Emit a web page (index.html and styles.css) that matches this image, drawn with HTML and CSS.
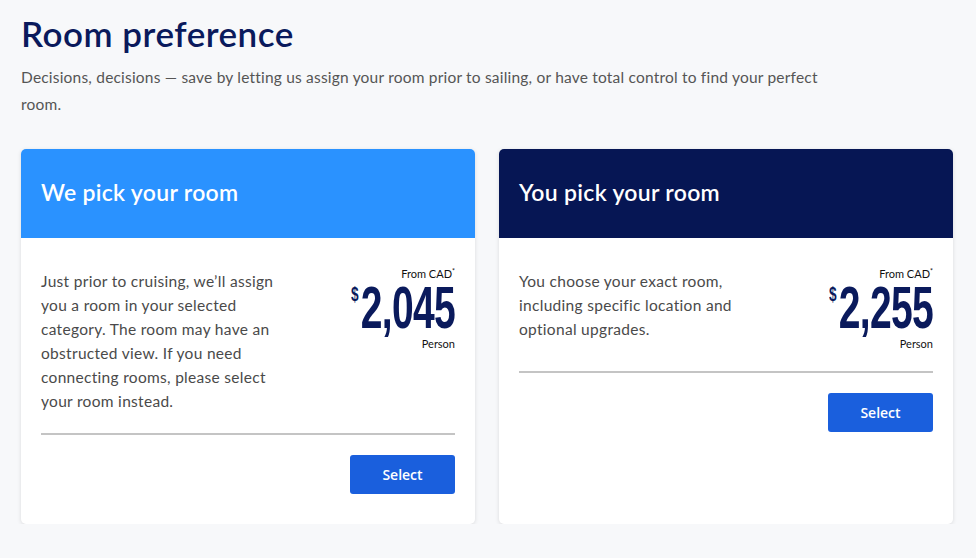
FILE: index.html
```html
<!DOCTYPE html>
<html>
<head>
<meta charset="utf-8">
<link rel="stylesheet" href="styles.css">
</head>
<body>
<main class="page">
  <h1 class="title">Room preference</h1>
  <p class="intro">Decisions, decisions — save by letting us assign your room prior to sailing, or have total control to find your perfect room.</p>
  <div class="cards">
    <section class="card">
      <header class="card-head light"><h2>We pick your room</h2></header>
      <div class="card-body">
        <div class="info">
          <p class="desc">Just prior to cruising, we’ll assign you a room in your selected category. The room may have an obstructed view. If you need connecting rooms, please select your room instead.</p>
          <div class="price">
            <div class="from">From CAD<sup>*</sup></div>
            <div class="amount"><span class="cur">$</span><span class="num">2,045</span></div>
            <div class="per">Person</div>
          </div>
        </div>
        <hr class="divider">
        <div class="actions"><button class="btn">Select</button></div>
      </div>
    </section>
    <section class="card">
      <header class="card-head dark"><h2>You pick your room</h2></header>
      <div class="card-body">
        <div class="info">
          <p class="desc">You choose your exact room, including specific location and optional upgrades.</p>
          <div class="price">
            <div class="from">From CAD<sup>*</sup></div>
            <div class="amount"><span class="cur">$</span><span class="num">2,255</span></div>
            <div class="per">Person</div>
          </div>
        </div>
        <hr class="divider">
        <div class="actions"><button class="btn">Select</button></div>
      </div>
    </section>
  </div>
</main>
</body>
</html>
```
FILE: styles.css
```css
html, body {
  margin: 0;
  padding: 0;
  background: #f7f8fa;
}
body {
  font-family: "Lato", "Open Sans", "Liberation Sans", sans-serif;
  color: #4a4a4a;
}
.page {
  padding: 11px 23px 0 21px;
}
.title {
  margin: 0;
  font-size: 35px;
  font-weight: 600;
  color: #0a1a5c;
  line-height: 44px;
  letter-spacing: 0.5px;
}
.intro {
  margin: 9px 0 0;
  font-size: 15.5px;
  line-height: 27px;
  letter-spacing: 0.2px;
  color: #555;
  max-width: 805px;
}
.cards {
  display: grid;
  grid-template-columns: 454px 454px;
  gap: 24px;
  margin-top: 31px;
  align-items: stretch;
}
.card {
  background: #fff;
  border-radius: 5px;
  box-shadow: 0 1px 4px rgba(0,0,0,0.12);
  overflow: hidden;
  height: 375px;
  display: flex;
  flex-direction: column;
}
.card-head {
  height: 89px;
  box-sizing: border-box;
  display: flex;
  align-items: center;
  padding: 0 20px 4px;
}
.card-head h2 {
  margin: 0;
  color: #fff;
  font-size: 23px;
  font-weight: 600;
  letter-spacing: 0.3px;
}
.light { background: #2a92ff; }
.dark { background: #061654; }
.card-body {
  padding: 31px 20px 30px;
}
.info {
  display: flex;
  justify-content: space-between;
  align-items: flex-start;
}
.desc {
  margin: 0;
  width: 245px;
  font-size: 15.5px;
  line-height: 24px;
  letter-spacing: 0.3px;
  color: #4a4a4a;
}
.price {
  text-align: right;
  color: #111;
  margin-top: -2px;
}
.from {
  font-size: 11px;
  line-height: 14px;
}
.from sup {
  font-size: 7px;
  vertical-align: top;
  line-height: 8px;
}
.amount {
  display: flex;
  justify-content: flex-end;
  align-items: flex-start;
  color: #0a1a5c;
  height: 52px;
  margin-top: 4px;
}
.cur {
  display: inline-block;
  font-family: "Liberation Sans", sans-serif;
  font-weight: 700;
  font-size: 21px;
  line-height: 20px;
  margin-top: -1px;
  margin-right: 0;
  transform: scaleX(0.65);
}
.num {
  display: inline-block;
  font-family: "Liberation Sans", sans-serif;
  font-weight: 700;
  font-size: 60px;
  line-height: 46px;
  letter-spacing: -1px;
  margin-left: -51px;
  transform: scaleX(0.65);
  transform-origin: right center;
}
.per {
  font-size: 11px;
  line-height: 14px;
}
.divider {
  border: 0;
  height: 2px;
  background: #c4c4c4;
  margin: 20px 0 0;
}
.actions {
  display: flex;
  justify-content: flex-end;
  margin-top: 20px;
}
.btn {
  width: 105px;
  height: 39px;
  border: 0;
  border-radius: 3px;
  background: #1a5fdd;
  color: #fff;
  font-family: "Open Sans", "Liberation Sans", sans-serif;
  font-size: 14px;
  font-weight: 600;
}
```
